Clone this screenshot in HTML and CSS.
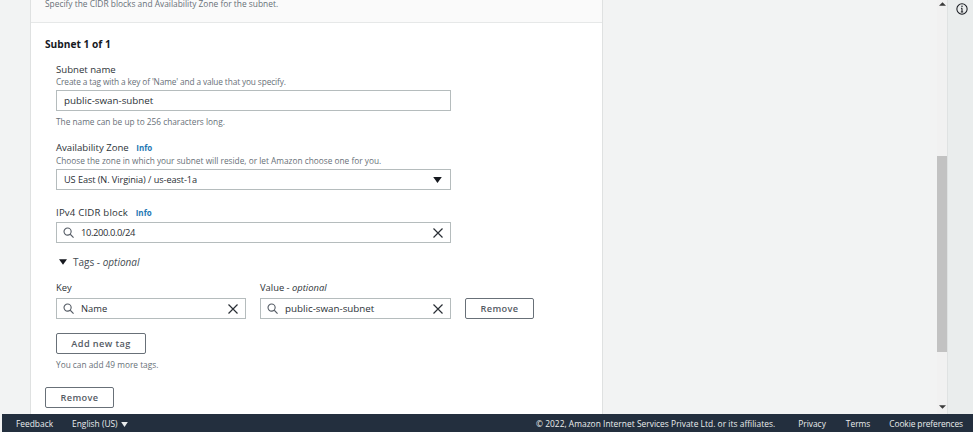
FILE: index.html
```html
<!DOCTYPE html>
<html lang="en">
<head>
<meta charset="utf-8">
<title>Create subnet</title>
<link rel="stylesheet" href="styles.css">
</head>
<body>
<div class="viewport">
  <main class="scroll-area">
    <section class="card">
      <div class="card-head">Specify the CIDR blocks and Availability Zone for the subnet.</div>
      <div class="card-body">
        <h2 class="subnet-title">Subnet 1 of 1</h2>
        <div class="fields">
          <div class="field field-name">
            <div class="label label-short">Subnet name</div>
            <div class="desc desc-tight">Create a tag with a key of 'Name' and a value that you specify.</div>
            <div class="input text-wide">public-swan-subnet</div>
            <div class="hint">The name can be up to 256 characters long.</div>
          </div>
          <div class="field field-az">
            <div class="label">Availability Zone <a class="info">Info</a></div>
            <div class="desc">Choose the zone in which your subnet will reside, or let Amazon choose one for you.</div>
            <div class="input select"><span class="text-narrow">US East (N. Virginia) / us-east-1a</span><svg class="caret" viewBox="0 0 10 7" width="9" height="6"><path d="M0 0h10L5 7z"/></svg></div>
          </div>
          <div class="field field-cidr">
            <div class="label label-short label-wide">IPv4 CIDR block <a class="info">Info</a></div>
            <div class="input search">
              <svg class="mag" viewBox="0 0 12 12" width="11" height="11"><circle cx="5" cy="5" r="3.9"/><path d="M7.9 7.9 11.5 11.5"/></svg>
              <span class="grow text-digits">10.200.0.0/24</span>
              <svg class="clear" viewBox="0 0 10 10" width="10" height="10"><path d="M.5.5l9 9M9.5.5l-9 9"/></svg>
            </div>
          </div>
          <div class="tags-toggle">
            <svg class="caret" viewBox="0 0 10 7" width="8" height="6"><path d="M0 0h10L5 7z"/></svg>
            <span>Tags - <em>optional</em></span>
          </div>
          <div class="tag-row">
            <div class="tag-col tag-key">
              <div class="tag-label">Key</div>
              <div class="input search">
                <svg class="mag" viewBox="0 0 12 12" width="11" height="11"><circle cx="5" cy="5" r="3.9"/><path d="M7.9 7.9 11.5 11.5"/></svg>
                <span class="grow">Name</span>
                <svg class="clear" viewBox="0 0 10 10" width="10" height="10"><path d="M.5.5l9 9M9.5.5l-9 9"/></svg>
              </div>
            </div>
            <div class="tag-col tag-value">
              <div class="tag-label">Value - <em>optional</em></div>
              <div class="input search">
                <svg class="mag" viewBox="0 0 12 12" width="11" height="11"><circle cx="5" cy="5" r="3.9"/><path d="M7.9 7.9 11.5 11.5"/></svg>
                <span class="grow text-wide">public-swan-subnet</span>
                <svg class="clear" viewBox="0 0 10 10" width="10" height="10"><path d="M.5.5l9 9M9.5.5l-9 9"/></svg>
              </div>
            </div>
            <button class="btn btn-remove-tag">Remove</button>
          </div>
          <button class="btn btn-add">Add new tag</button>
          <div class="hint hint-tags">You can add 49 more tags.</div>
        </div>
        <button class="btn btn-remove">Remove</button>
      </div>
    </section>
    <div class="scrollbar">
      <svg class="arrow arrow-up" viewBox="0 0 8 4" width="7" height="4"><path d="M0 4h8L4 0z"/></svg>
      <div class="track"><div class="thumb"></div></div>
      <svg class="arrow arrow-down" viewBox="0 0 8 4" width="7" height="4"><path d="M0 0h8L4 4z"/></svg>
    </div>
  </main>
  <aside class="rail">
    <svg viewBox="0 0 14 14" width="12" height="12" class="rail-info"><circle cx="7" cy="7" r="6"/><path d="M7 6v4.2M5.6 10.4h2.8M5.8 6h1.4"/><circle class="dot" cx="7" cy="3.9" r=".9"/></svg>
  </aside>
</div>
<footer class="footer">
  <div class="foot-left">
    <span>Feedback</span>
    <span class="lang">English (US) <svg viewBox="0 0 8 6" width="7" height="5"><path d="M0 0h8L4 6z"/></svg></span>
  </div>
  <div class="foot-right">
    <span class="copy">© 2022, Amazon Internet Services Private Ltd. or its affiliates.</span>
    <span class="privacy">Privacy</span>
    <span>Terms</span>
    <span class="cookie">Cookie preferences</span>
  </div>
</footer>
</body>
</html>
```

FILE: styles.css
```css
* { box-sizing: border-box; }
html, body { margin: 0; padding: 0; width: 973px; height: 432px; overflow: hidden; }
body {
  font-family: "Open Sans", "Noto Sans", "Liberation Sans", sans-serif;
  color: #16191f;
  background: #f2f3f3;
  display: flex;
  flex-direction: column;
}
.viewport { display: flex; height: 414px; }
.scroll-area { flex: 1; display: flex; padding-left: 30px; justify-content: space-between; min-width: 0; background: #f2f3f3; }
.card { width: 573px; height: 414px; background: #fff; border-left: 1px solid #dfe1e1; border-right: 1px solid #dfe1e1; overflow: hidden; }
.card-head {
  height: 23px;
  background: #fafafa;
  border-bottom: 1px solid #e6e8e8;
  padding-left: 14px;
  font-size: 8.4px;
  line-height: 8px;
  color: #687078;
}
.card-body { padding: 14px 14px 0; }
.subnet-title { margin: 0; font-size: 10.2px; line-height: 14px; font-weight: 700; color: #16191f; }
.fields { padding-left: 11px; width: 417px; }
.field-name { margin-top: 12px; }
.field-az { margin-top: 14px; }
.field-cidr { margin-top: 16px; }
.label { font-size: 9.6px; line-height: 14px; color: #2d3338; }
.label-short { line-height: 13px; }
.label-wide { letter-spacing: .2px; }
.info { font-size: 8px; font-weight: 700; color: #1f78b4; margin-left: 5px; letter-spacing: 0; }
.desc { font-size: 8.3px; line-height: 11px; color: #687078; }
.desc-tight { letter-spacing: -.13px; }
.hint { font-size: 8.3px; line-height: 11px; color: #687078; margin-top: 5px; }
.input {
  height: 21px;
  margin-top: 3px;
  width: 395px;
  border: 1px solid #b5bcbd;
  background: #fff;
  display: flex;
  align-items: center;
  padding: 0 7px;
  font-size: 9.4px;
  color: #2a2f35;
}
.text-wide { font-size: 9.8px; }
.text-narrow { font-size: 9.2px; letter-spacing: -.08px; }
.text-digits { letter-spacing: -.4px; }
.select { justify-content: space-between; padding-right: 8px; }
.caret { fill: #16191f; }
.search { gap: 7px; padding: 0 7px 0 6px; }
.grow { flex: 1; }
.mag { fill: none; stroke: #545b64; stroke-width: 1.2; flex: none; }
.clear { fill: none; stroke: #2a2f35; stroke-width: 1.2; flex: none; }
.tags-toggle { margin-top: 12px; display: flex; align-items: center; gap: 6px; padding-left: 3px; height: 13px; font-size: 10px; color: #444b52; }
.tags-toggle em, .tag-label em { font-style: italic; }
.tag-row { display: flex; align-items: flex-end; margin-top: 13px; width: 500px; }
.tag-col { flex: none; }
.tag-key { width: 190px; margin-right: 14px; }
.tag-value { width: 191px; margin-right: 14px; }
.tag-col .input { width: 100%; margin-top: 4px; }
.tag-label { font-size: 9.4px; line-height: 13px; color: #2d3338; }
.btn {
  font-family: inherit;
  font-size: 9.2px;
  font-weight: 600;
  letter-spacing: .4px;
  color: #545b64;
  background: #fff;
  border: 1px solid #687078;
  border-radius: 2px;
  height: 21px;
  padding: 0;
  display: block;
}
.btn-remove-tag { width: 69px; }
.btn-add { width: 90px; margin-top: 14px; }
.hint-tags { margin-top: 5px; }
.btn-remove { width: 69px; margin-top: 17px; }
.scrollbar { width: 11px; display: flex; flex-direction: column; align-items: center; background: #f1f1f1; border-right: 1px solid #dfe2e2; }
.arrow { fill: #3a3a3a; flex: none; }
.arrow-up { margin: 2px 0 0; }
.arrow-down { margin: 0 0 5px; }
.track { flex: 1; width: 100%; padding-top: 150px; padding-bottom: 53px; }
.thumb { height: 100%; background: #c2c2c2; }
.rail { width: 25px; background: #eaeded; display: flex; justify-content: flex-end; padding: 3px 5px 0 0; }
.rail-info { fill: none; stroke: #16191f; stroke-width: 1.2; }
.rail-info .dot { fill: #16191f; stroke: none; }
.footer {
  height: 18px;
  margin-left: 2px;
  background: #232f3e;
  color: #eaeded;
  font-size: 8.4px;
  display: flex;
  align-items: center;
  justify-content: space-between;
  padding: 0 10px 0 14px;
  font-weight: 500;
}
.foot-left { display: flex; gap: 19px; }
.foot-left svg { fill: #eaeded; margin-left: 1px; }
.foot-right { display: flex; gap: 19px; }
.copy { margin-right: 4px; letter-spacing: .03px; }
.privacy { margin-right: 1px; }
.cookie { letter-spacing: -.1px; }
```
